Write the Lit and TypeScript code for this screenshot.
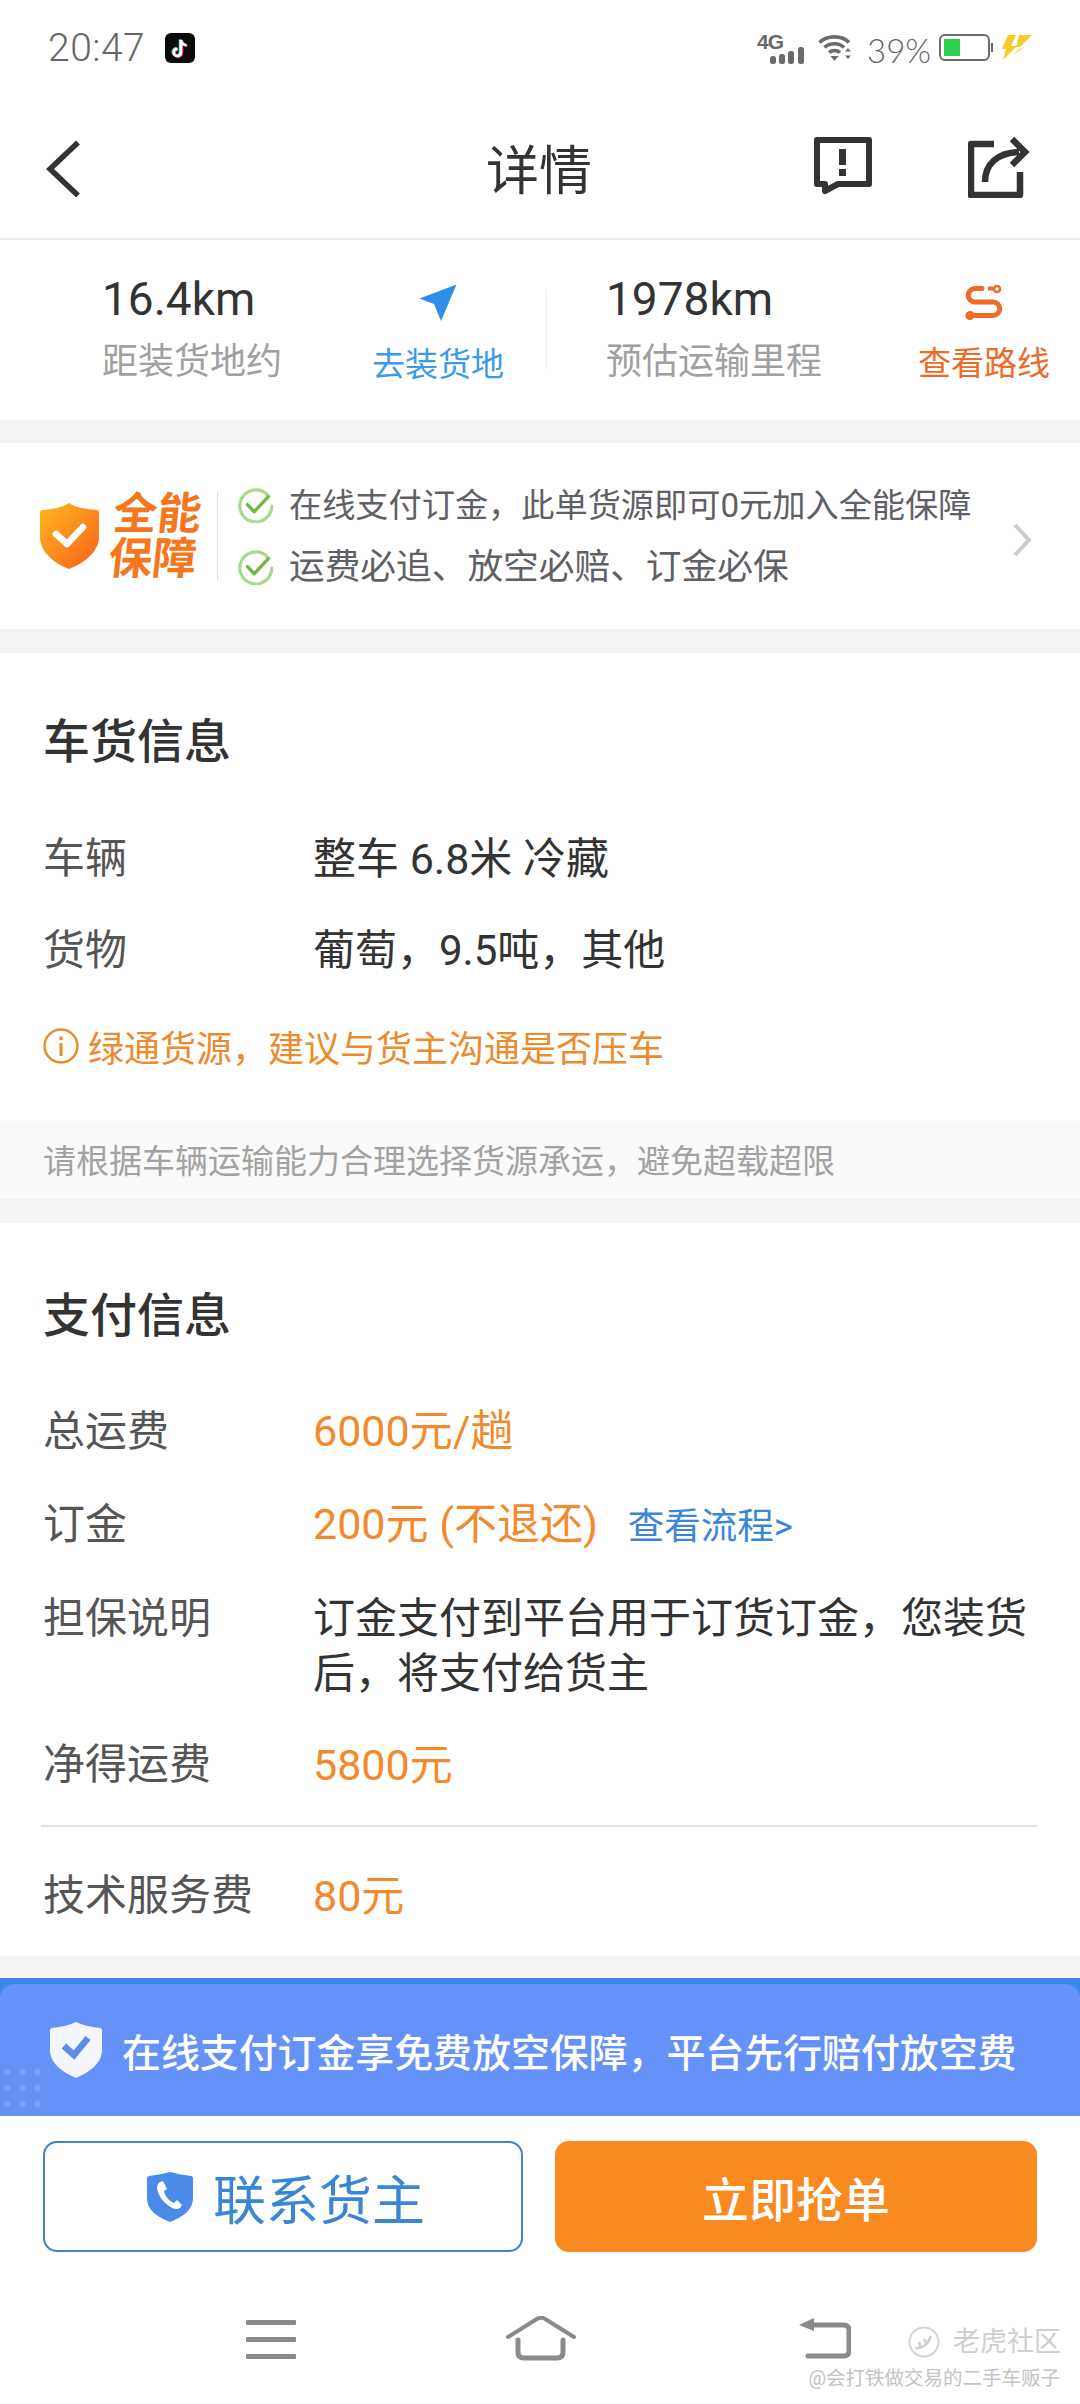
import { LitElement, html, css } from "lit";
import { customElement } from "lit/decorators.js";

@customElement("app-root")
export class AppRoot extends LitElement {
  static styles = css`
    :host { display: block; width: 1080px; height: 2404px; background: #fff; position: relative; overflow: hidden;
      font-family: Roboto, "Noto Sans CJK SC", sans-serif; color: #333; }
    svg { display: block; flex: none; }
    .status { height: 96px; display: flex; align-items: center; padding: 0 48px; box-sizing: border-box; color: #666; }
    .time { font-size: 39px; font-weight: 300; letter-spacing: 0.5px; width: 117px; }
    .status-right { margin-left: auto; display: flex; align-items: center; }
    .pct { font-family: Lato, sans-serif; font-size: 33px; font-weight: 300; margin: 4px 0 0 12px; width: 73px; }
    .header { height: 144px; display: flex; align-items: center; border-bottom: 2px solid #ececec; box-sizing: border-box; position: relative; padding-left: 45px; }
    .back { margin-top: 4px; }
    .title { position: absolute; left: 0; right: 2px; text-align: center; font-size: 53px; color: #333; }
    .h-actions { margin-left: auto; display: flex; align-items: center; gap: 94px; padding-right: 50px; }
    .stats { height: 180px; display: flex; align-items: center; box-sizing: border-box; padding-left: 102px; }
    .stat { display: flex; flex-direction: column; flex: none; padding-bottom: 3px; }
    .num { font-size: 46px; line-height: 60px; color: #333; }
    .cap { font-size: 36px; line-height: 52px; margin-top: 7px; color: #a0a0a0; }
    .act { display: flex; flex-direction: column; align-items: center; font-size: 33px; flex: none; white-space: nowrap; padding-top: 12px; }
    .act span { line-height: 46px; margin-top: 20px; }
    .blue { color: #3a9be8; }
    .red { color: #ef6a24; }
    .vline { width: 1px; height: 80px; background: #eee; flex: none; }
    .gap { height: 24px; background: #f4f4f4; flex: none; }
    .gap.g23 { height: 23px; }
    .guard { height: 186px; display: flex; align-items: center; padding-left: 39px; box-sizing: border-box; position: relative; }
    .brand { width: 90px; margin-left: 12px; font-size: 44px; line-height: 45px; font-weight: 700; color: #f5761c; transform: skewX(-6deg); padding-top: 2px; }
    .gdiv { width: 1px; height: 88px; background: #ddd; margin: 0 20px 0 16px; }
    .checks { display: flex; flex-direction: column; gap: 25px; }
    .check { display: flex; align-items: center; gap: 15px; line-height: 37px; color: #5f6066; }
    .c1 { font-size: 33.200px; }
    .c2 { font-size: 35.700px; }
    .chev { position: absolute; left: 1012px; top: 80px; }
    .sec { padding: 60px 43px 0; }
    .sec h2 { margin: 0 0 40px; font-size: 47px; line-height: 58px; font-weight: 500; color: #333; }
    .sec.pay { height: 733px; box-sizing: border-box; padding-top: 64px; }
    .sec.pay h2 { margin-bottom: 38px; }
    .row { display: grid; grid-template-columns: 270px 1fr; align-items: center; height: 92px; font-size: 42px; color: #333; padding-bottom: 5px; box-sizing: border-box; }
    .row .k { color: #555; }
    .row.tall { height: 93px; }
    .row.after { margin-top: 19px; }
    .v { font-size: 43px; }
    .v2 { font-size: 42px; }
    .o { color: #f4892c; font-size: 43px; }
    .warn { display: flex; align-items: center; gap: 9px; height: 70px; margin-top: 16px; margin-bottom: 2px; font-size: 36px; color: #ec8a2c; }
    .tip { height: 78px; margin-top: 40px; background: #fafafa; display: flex; align-items: center; padding: 0 0 2px 43px; box-sizing: border-box; font-size: 33px; color: #a2a2a2; }
    .multi { display: grid; grid-template-columns: 270px 1fr; font-size: 42px; line-height: 55px; padding-top: 22px; height: 129px; box-sizing: border-box; }
    .multi .k { color: #555; }
    .link { font-size: 36.500px; color: #3a86d8; margin-left: 30px; }
    .hr { height: 2px; background: #e2e2e2; margin: 16px 0 21px -2px; }
    .strip { height: 6px; background: #3a87ee; }
    .banner { height: 132px; background: #6492f8; border-radius: 14px 14px 0 0; position: relative; display: flex; align-items: center; padding-left: 50px; box-sizing: border-box; gap: 20px; color: #fff; font-size: 38.900px; overflow: hidden; font-weight: 500; }
    .stripbox { background: #3a87ee; }
    .dots { position: absolute; left: 0; bottom: 0; width: 50px; height: 52px; background-image: radial-gradient(circle, rgba(255,255,255,.14) 3px, transparent 3.600px); background-size: 15px 16px; }
    .btns { display: flex; padding: 25px 43px 0; justify-content: space-between; }
    .btn { height: 111px; border-radius: 14px; box-sizing: border-box; display: flex; align-items: center; justify-content: center; flex: none; }
    .b1 { width: 480px; border: 2px solid #3d85c6; color: #3a86d6; font-size: 53px; gap: 20px; padding-left: 6px; }
    .b2 { width: 482px; background: #f98a1f; color: #fff; font-size: 47px; font-weight: 500; }
    .nav { display: flex; align-items: flex-start; padding: 68px 0 0 246px; }
    .nav .home { margin: -4px 0 0 210px; }
    .nav .ret { margin: -2px 0 0 223px; }
    .wm { position: absolute; left: 908px; top: 2322px; display: flex; align-items: center; gap: 13px; font-size: 27px; color: #cfcfcf; line-height: 40px; }
    .wm2 { position: absolute; right: 20px; top: 2367px; font-size: 19.500px; line-height: 24px; color: #c4c4c4; }
  `;

  check() {
    return html`<svg width="36" height="36" viewBox="0 0 36 36" fill="none"><path d="M29 7.500A16 16 0 1 0 33.800 19" stroke="#a8d98c" stroke-width="3.200" stroke-linecap="round"/><path d="M10 17.500l7 7.500L32 9" stroke="#6fb944" stroke-width="3.600" stroke-linecap="round" stroke-linejoin="round" transform="translate(0 1) scale(.95)"/></svg>`;
  }

  render() {
    return html`
      <div class="status">
        <div class="time">20:47</div>
        <svg width="30" height="30" viewBox="0 0 30 30"><rect width="30" height="30" rx="6" fill="#0a0a0a"/><path d="M16 7v12.500a3.600 3.600 0 1 1-3.600-3.600M16 7c.5 3 2.500 5 5.500 5.200" fill="none" stroke="#25f4ee" stroke-width="2.600" transform="translate(-1 -.6)"/><path d="M16 7v12.500a3.600 3.600 0 1 1-3.600-3.600M16 7c.5 3 2.500 5 5.500 5.200" fill="none" stroke="#fe2c55" stroke-width="2.600" transform="translate(1 .6)"/><path d="M16 7v12.500a3.600 3.600 0 1 1-3.600-3.600M16 7c.5 3 2.500 5 5.500 5.200" fill="none" stroke="#fff" stroke-width="2.600"/></svg>
        <div class="status-right">
          <svg style="margin-bottom:3px" width="50" height="36" viewBox="0 0 50 36"><text x="0" y="20" font-family="Liberation Sans" font-weight="700" font-size="21" fill="#6a6a6a" letter-spacing="-1">4G</text><g fill="#6a6a6a"><rect x="13" y="27" width="6" height="8" rx="2.500"/><rect x="22" y="25" width="6" height="10" rx="2.500"/><rect x="31" y="22" width="6" height="13" rx="2.500"/><rect x="41" y="18" width="6" height="17" rx="2.500"/></g></svg>
          <svg style="margin-left:11px" width="37" height="28" viewBox="0 0 37 28" fill="none"><path d="M1.500 8.500C9 1 24 1 31 8.500M6.500 13.500C12 8.500 21 8.500 26 13.500M11 18.500c3-2.600 8-2.600 11 0" stroke="#6a6a6a" stroke-width="3.600"/><path d="M12.500 22h8l-4 5zM30 14l3 3.600h-6zM27 21.500h6l-3 3.600z" fill="#6a6a6a"/></svg>
          <div class="pct">39%</div>
          <svg style="margin-left:-1px" width="54" height="28" viewBox="0 0 54 28"><rect x="1" y="1" width="49" height="25" rx="5" fill="none" stroke="#6a6a6a" stroke-width="2"/><rect x="5" y="5" width="16" height="17" fill="#2ed14f"/><rect x="52" y="9" width="2" height="9" fill="#6a6a6a"/></svg>
          <svg style="margin-left:9px" width="30" height="26" viewBox="0 0 30 26"><path d="M6 0h8L9 11h6L1 25l3-11H0z" fill="#f5cc2a"/><path d="M17 0h13L18 12h-4z" fill="#f5cc2a"/><path d="M16 14l-5 6 12-8z" fill="#f8dc6c"/></svg>
        </div>
      </div>

      <div class="header">
        <svg class="back" width="36" height="58" viewBox="0 0 36 58" fill="none"><path d="M33 2.500L5 29l28 26.500" stroke="#333" stroke-width="5.500"/></svg>
        <div class="title">详情</div>
        <div class="h-actions">
          <svg width="58" height="60" viewBox="0 0 58 60" fill="none"><path d="M3 3h52v44H24L11 54v-7H3z" stroke="#333" stroke-width="6" stroke-linejoin="round"/><rect x="25" y="12" width="7" height="16" fill="#333"/><rect x="25" y="32" width="7" height="7" fill="#333"/></svg>
          <svg style="margin-left:2px" width="62" height="62" viewBox="0 0 62 62" fill="none"><path d="M26 8H3v51h49V36" stroke="#333" stroke-width="6.500" stroke-linejoin="round"/><path d="M17 46c0-18 12-29 34-30" stroke="#333" stroke-width="6.500"/><path d="M44 3l13 13-13 13" stroke="#333" stroke-width="6.500"/></svg>
        </div>
      </div>

      <div class="stats">
        <div class="stat" style="width:271px"><div class="num">16.4km</div><div class="cap">距装货地约</div></div>
        <div class="act blue" style="width:130px"><svg width="38" height="38" viewBox="0 0 38 38"><path d="M37.500 0.500L0.500 14.500 15 20 22 37z" fill="#2f8fe8"/></svg><span>去装货地</span></div>
        <div class="vline" style="margin:0 59px 0 43px"></div>
        <div class="stat" style="width:313px"><div class="num">1978km</div><div class="cap">预估运输里程</div></div>
        <div class="act red" style="width:130px"><svg width="38" height="36" viewBox="0 0 38 36" fill="none"><path d="M17 3.500H10a6.750 6.750 0 0 0 0 13.500h18a6.750 6.750 0 0 1 0 13.500H6" stroke="#ef6a24" stroke-width="5" stroke-linecap="round"/><path d="M23 3.500h5" stroke="#ef6a24" stroke-width="4"/><circle cx="32" cy="4" r="3" stroke="#ef6a24" stroke-width="2.500"/><circle cx="5" cy="30.500" r="4.500" fill="#ef6a24"/></svg><span>查看路线</span></div>
      </div>

      <div class="gap g23"></div>

      <div class="guard">
        <svg width="60" height="68" viewBox="0 0 60 68"><defs><linearGradient id="sg" x1="0" y1="0" x2="1" y2="1"><stop offset="0" stop-color="#fdb820"/><stop offset="1" stop-color="#fa5f1c"/></linearGradient></defs><path d="M30 1c6 4 15 6 28 7 1 0 2 1 2 3v24c0 14-14 26-30 32C14 61 1 49 1 35V11c0-2 1-3 2-3C15 7 24 5 30 1z" fill="url(#sg)"/><path d="M17 32l11 10 16-17" fill="none" stroke="#fff" stroke-width="6.500" stroke-linecap="round" stroke-linejoin="round"/></svg>
        <div class="brand">全能<br />保障</div>
        <div class="gdiv"></div>
        <div class="checks">
          <div class="check c1">${this.check()}<span>在线支付订金，此单货源即可0元加入全能保障</span></div>
          <div class="check c2">${this.check()}<span>运费必追、放空必赔、订金必保</span></div>
        </div>
        <svg class="chev" width="20" height="34" viewBox="0 0 20 34" fill="none"><path d="M3 2l14 15L3 32" stroke="#cbcbcb" stroke-width="4"/></svg>
      </div>

      <div class="gap"></div>

      <div class="sec">
        <h2>车货信息</h2>
        <div class="row"><span class="k">车辆</span><span class="v">整车 6.8米 冷藏</span></div>
        <div class="row"><span class="k">货物</span><span class="v2">葡萄，9.5吨，其他</span></div>
        <div class="warn">
          <svg width="36" height="36" viewBox="0 0 36 36" fill="none"><circle cx="18" cy="18" r="16.500" stroke="#ec8a2c" stroke-width="2.400"/><rect x="16.500" y="15" width="3" height="13" fill="#ec8a2c"/><rect x="16.500" y="8.500" width="3" height="3.500" fill="#ec8a2c"/></svg>
          <span>绿通货源，建议与货主沟通是否压车</span>
        </div>
      </div>
      <div class="tip">请根据车辆运输能力合理选择货源承运，避免超载超限</div>

      <div class="gap"></div>

      <div class="sec pay">
        <h2>支付信息</h2>
        <div class="row tall"><span class="k">总运费</span><span class="o">6000元/趟</span></div>
        <div class="row tall"><span class="k">订金</span><span><span class="o">200元 (不退还)</span><span class="link">查看流程&gt;</span></span></div>
        <div class="multi"><span class="k">担保说明</span><span>订金支付到平台用于订货订金，您装货后，将支付给货主</span></div>
        <div class="row after"><span class="k">净得运费</span><span class="o">5800元</span></div>
        <div class="hr"></div>
        <div class="row"><span class="k">技术服务费</span><span class="o">80元</span></div>
      </div>

      <div class="gap" style="height:22px"></div>
      <div class="strip"></div>
      <div class="stripbox">
        <div class="banner">
          <div class="dots"></div>
          <svg width="52" height="56" viewBox="0 0 52 56"><path d="M26 0c6 3 14 5 24 6 1 0 2 1 2 2v20c0 13-12 22-26 28C12 50 0 41 0 28V8c0-1 1-2 2-2 10-1 18-3 24-6z" fill="#f3f6fe"/><path d="M14 24l10 9 14-17" fill="none" stroke="#5d8ce8" stroke-width="6.500"/></svg>
          <span>在线支付订金享免费放空保障，平台先行赔付放空费</span>
        </div>
      </div>

      <div class="btns">
        <div class="btn b1">
          <svg width="46" height="52" viewBox="0 0 46 52"><path d="M23 1c7 2 15 3 21 4 1 0 2 1 2 2v20c0 12-10 19-23 24C10 46 0 39 0 27V7c0-1 1-2 2-2 6-1 14-2 21-4z" fill="#4a8ae8"/><path d="M13 11l3-1 4 8-3 2c1 5 5 10 10 12l3-3 5 5-2 3c-3 2-7 1-11-2-6-4-11-11-12-18 0-3 1-5 3-6z" fill="#fff"/></svg>
          <span>联系货主</span>
        </div>
        <div class="btn b2">立即抢单</div>
      </div>

      <div class="nav">
        <svg width="50" height="40" viewBox="0 0 50 40" fill="#8a8a8a"><rect y="0" width="50" height="5" rx="1"/><rect y="17" width="50" height="5" rx="1"/><rect y="34" width="50" height="5" rx="1"/></svg>
        <svg class="home" width="70" height="46" viewBox="0 0 70 46" fill="none"><path d="M2 21L30 3.500c3-2 7-2 10 0L68 21" stroke="#8a8a8a" stroke-width="4" stroke-linecap="round"/><path d="M12 24v12c0 4 2 6 6 6h33c4 0 6-2 6-6V24" stroke="#8a8a8a" stroke-width="5" stroke-linecap="round"/></svg>
        <svg class="ret" width="52" height="42" viewBox="0 0 52 42" fill="none"><path d="M14 7h31c3 0 5 2 5 5v21c0 3-2 5-5 5H9" stroke="#8a8a8a" stroke-width="5" stroke-linecap="round"/><path d="M15 0v13L0 7z" fill="#8a8a8a"/></svg>
      </div>

      <div class="wm">
        <svg width="32" height="32" viewBox="0 0 32 32" fill="none"><circle cx="16" cy="16" r="14.500" stroke="#d4d4d4" stroke-width="2"/><path d="M7 22c6 1 13-3 16-12M13 22l-2-6M19 18l-3-5" stroke="#cfcfcf" stroke-width="2.500"/></svg>
        <span>老虎社区</span>
      </div>
      <div class="wm2">@会打铁做交易的二手车贩子</div>
    `;
  }
}
